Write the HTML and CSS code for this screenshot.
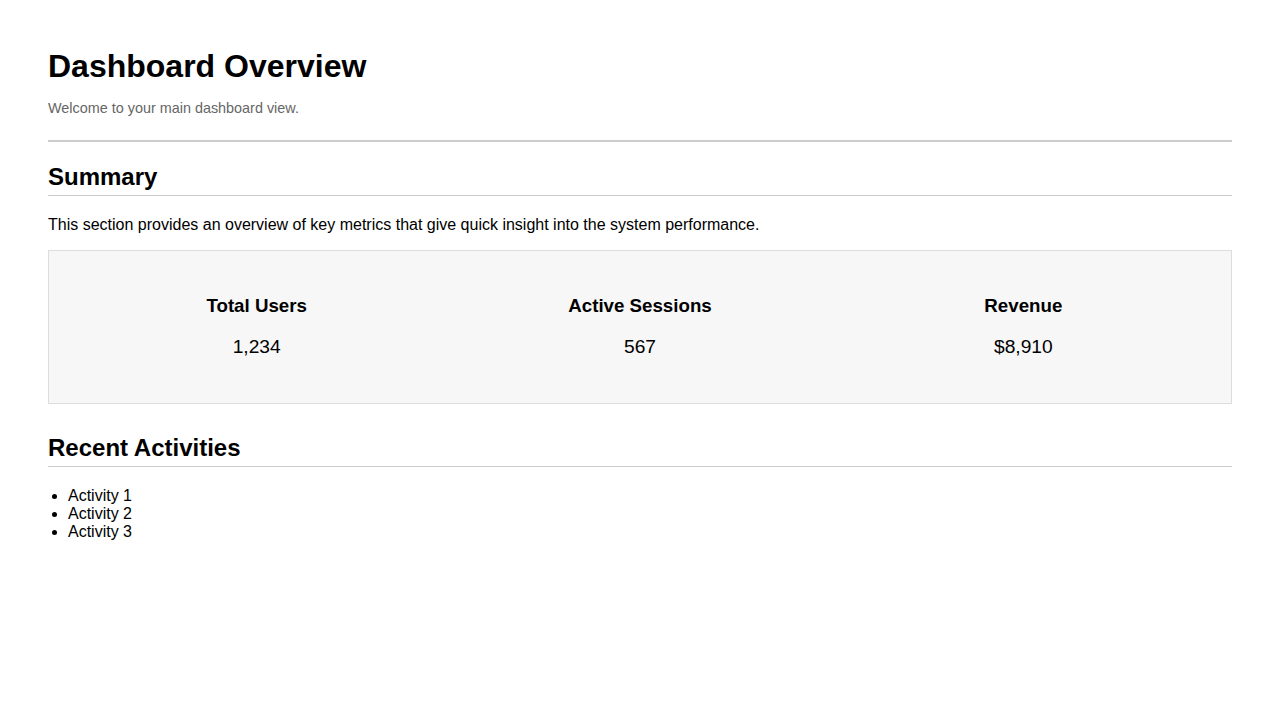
FILE: index.html
```html
<!DOCTYPE html>
<html lang="en">
<head>
<meta charset="utf-8">
<title>Dashboard Overview</title>
<link rel="stylesheet" href="styles.css">
</head>
<body>
  <header class="page-header">
    <h1 class="title">Dashboard Overview</h1>
    <p class="subtitle">Welcome to your main dashboard view.</p>
  </header>
  <hr class="divider">
  <section class="section summary">
    <h2 class="section-title">Summary</h2>
    <p class="section-text">This section provides an overview of key metrics that give quick insight into the system performance.</p>
    <div class="metrics">
      <div class="metric">
        <h3 class="metric-label">Total Users</h3>
        <div class="metric-value">1,234</div>
      </div>
      <div class="metric">
        <h3 class="metric-label">Active Sessions</h3>
        <div class="metric-value">567</div>
      </div>
      <div class="metric">
        <h3 class="metric-label">Revenue</h3>
        <div class="metric-value">$8,910</div>
      </div>
    </div>
  </section>
  <section class="section activities">
    <h2 class="section-title">Recent Activities</h2>
    <ul class="activity-list">
      <li>Activity 1</li>
      <li>Activity 2</li>
      <li>Activity 3</li>
    </ul>
  </section>
</body>
</html>
```
FILE: styles.css
```css
html, body {
  margin: 0;
  padding: 0;
  background: #ffffff;
}
body {
  padding: 48px;
  font-family: "Liberation Sans", Arial, sans-serif;
  color: #000;
}
.title {
  margin: 0;
  font-size: 32px;
  font-weight: bold;
  line-height: 37px;
}
.subtitle {
  margin: 15px 0 0;
  font-size: 14.4px;
  line-height: 17px;
  color: #666;
}
.divider {
  margin: 23px 0 0;
  border: 0;
  height: 2px;
  background: #cccccc;
}
.section {
  margin-top: 21px;
}
.activities {
  margin-top: 30px;
}
.section-title {
  margin: 0;
  font-size: 24px;
  font-weight: bold;
  line-height: 28px;
  padding-bottom: 4px;
  border-bottom: 1px solid #cccccc;
}
.section-text {
  margin: 19px 0 0;
  font-size: 16px;
  line-height: 19px;
}
.metrics {
  margin-top: 16px;
  display: grid;
  grid-template-columns: repeat(3, 1fr);
  padding: 44px 16px 45px;
  background: #f7f7f7;
  border: 1px solid #dddddd;
}
.metric {
  text-align: center;
}
.metric-label {
  margin: 0;
  font-size: 18.72px;
  font-weight: bold;
  line-height: 21px;
}
.metric-value {
  margin-top: 20px;
  font-size: 19.2px;
  line-height: 22px;
}
.activity-list {
  margin: 20px 0 0;
  padding-left: 20px;
  font-size: 16px;
  line-height: 18px;
}
```
